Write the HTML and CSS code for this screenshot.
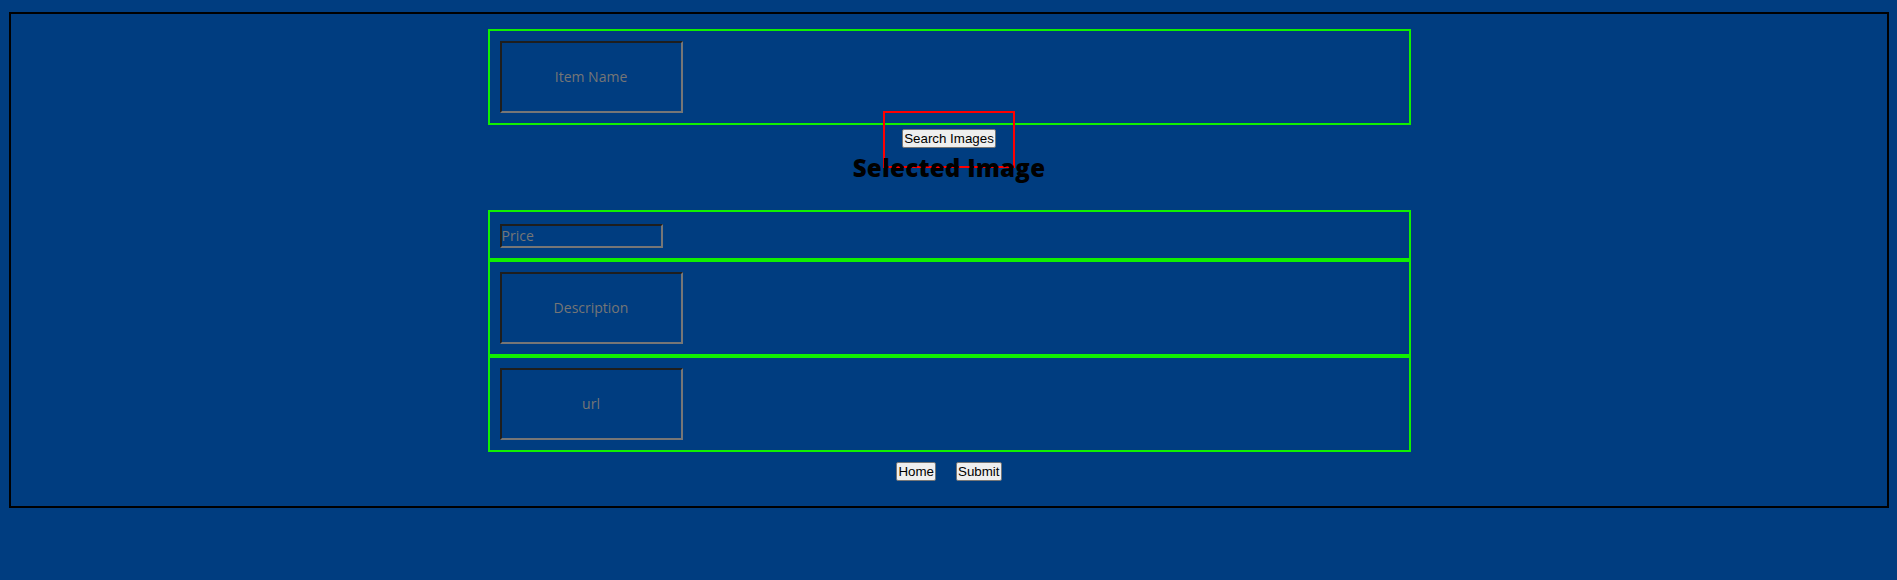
FILE: index.html
```html
<!DOCTYPE html>
<html lang="en">
<head>
<meta charset="utf-8">
<title>Add Item</title>
<link rel="stylesheet" href="styles.css">
</head>
<body>
<div class="frame">
  <div class="field">
    <input class="box-input" type="text" placeholder="Item Name">
  </div>
  <div class="search-wrap">
    <button class="btn" type="button">Search Images</button>
  </div>
  <h2 class="title">Selected Image</h2>
  <div class="field field-price">
    <input class="price-input" type="text" placeholder="Price">
  </div>
  <div class="field">
    <input class="box-input" type="text" placeholder="Description">
  </div>
  <div class="field">
    <input class="box-input" type="text" placeholder="url">
  </div>
  <div class="actions">
    <button class="btn" type="button">Home</button>
    <button class="btn" type="button">Submit</button>
  </div>
</div>
</body>
</html>
```

FILE: styles.css
```css
html, body {
  margin: 0;
  padding: 0;
}

body {
  background: #003d80;
  min-height: 100vh;
  font-family: "Open Sans", "Liberation Sans", sans-serif;
}

.frame {
  margin: 12px 8px 0 9px;
  border: 2px solid #000;
  padding: 15px 0 25px;
}

.field {
  box-sizing: border-box;
  width: 923px;
  margin: 0 auto;
  border: 2px solid #11f000;
  padding: 10px;
  display: flex;
  align-items: flex-start;
}

.field-price {
  padding: 12px 10px 10px;
}

.box-input,
.price-input {
  box-sizing: border-box;
  margin: 0;
  padding: 0 0 2px;
  background: transparent;
  border-width: 2px;
  border-style: solid;
  border-color: #1e1e1e #767676 #767676 #1e1e1e;
  font-family: "Open Sans", "Liberation Sans", sans-serif;
  font-size: 14px;
  color: #767676;
  outline: none;
}

.box-input {
  width: 183px;
  height: 72px;
  text-align: center;
}

.price-input {
  width: 163px;
  height: 24px;
  text-align: left;
}

.box-input::placeholder,
.price-input::placeholder {
  color: #767676;
  opacity: 1;
}

.search-wrap {
  box-sizing: border-box;
  width: 132px;
  height: 57px;
  margin: -14px auto 0;
  border: 2px solid #ff0000;
  padding-top: 16px;
  display: flex;
  justify-content: center;
  align-items: flex-start;
}

.btn {
  margin: 0;
  padding: 1px;
  font-family: "Liberation Sans", Arial, sans-serif;
  font-size: 13.33px;
  line-height: 15px;
  color: #000;
  background: #efefef;
  border: 1px solid #767676;
  border-radius: 2px;
}

.title {
  margin: -18px 0 24px;
  text-align: center;
  font-family: "Open Sans", "Liberation Sans", sans-serif;
  font-weight: 800;
  font-size: 24px;
  line-height: 36px;
  letter-spacing: 0.3px;
  color: #000;
}

.actions {
  display: flex;
  justify-content: center;
  gap: 20px;
  margin-top: 10px;
}
```
